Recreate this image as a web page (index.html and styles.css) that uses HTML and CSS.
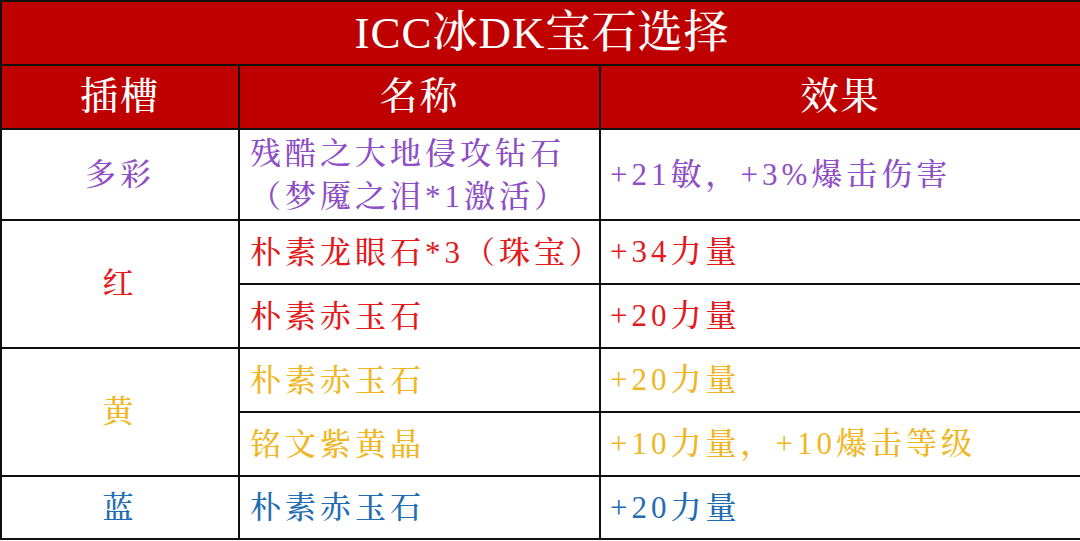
FILE: index.html
```html
<!DOCTYPE html>
<html lang="zh-CN">
<head>
<meta charset="utf-8">
<title>ICC冰DK宝石选择</title>
<link rel="stylesheet" href="styles.css">
</head>
<body>
<table class="gems">
  <colgroup>
    <col class="c-slot">
    <col class="c-name">
    <col class="c-effect">
  </colgroup>
  <thead>
    <tr class="r-title"><th colspan="3" class="title">ICC冰DK宝石选择</th></tr>
    <tr class="r-head"><th>插槽</th><th>名称</th><th>效果</th></tr>
  </thead>
  <tbody>
    <tr class="r-tall purple">
      <td class="slot">多彩</td>
      <td class="name">残酷之大地侵攻钻石<br>（梦魇之泪*1激活）</td>
      <td class="effect">+21敏，+3%爆击伤害</td>
    </tr>
    <tr class="r-std red">
      <td class="slot" rowspan="2">红</td>
      <td class="name nowrap">朴素龙眼石*3（珠宝）</td>
      <td class="effect">+34力量</td>
    </tr>
    <tr class="r-std red">
      <td class="name">朴素赤玉石</td>
      <td class="effect">+20力量</td>
    </tr>
    <tr class="r-std yellow">
      <td class="slot" rowspan="2">黄</td>
      <td class="name">朴素赤玉石</td>
      <td class="effect">+20力量</td>
    </tr>
    <tr class="r-std yellow">
      <td class="name">铭文紫黄晶</td>
      <td class="effect">+10力量，+10爆击等级</td>
    </tr>
    <tr class="r-last blue">
      <td class="slot">蓝</td>
      <td class="name">朴素赤玉石</td>
      <td class="effect">+20力量</td>
    </tr>
  </tbody>
</table>
</body>
</html>
```

FILE: styles.css
```css
html, body {
  margin: 0;
  padding: 0;
  background: #ffffff;
}

body {
  font-family: "Liberation Serif", "Noto Serif CJK SC", "Noto Sans CJK SC", serif;
}

.gems {
  width: 1080px;
  border-collapse: collapse;
  table-layout: fixed;
}

.c-slot { width: 238px; }
.c-name { width: 361px; }
.c-effect { width: 481px; }

.gems th,
.gems td {
  border: 2px solid #141010;
  padding: 0;
  vertical-align: middle;
  line-height: 1.2;
}

.gems th {
  background: #bf0000;
  color: #ffffff;
  font-weight: 500;
  text-align: center;
}

.r-title { height: 64px; }
.r-head { height: 64px; }
.r-tall { height: 91px; }
.r-std { height: 64px; }
.r-last { height: 63px; }

.gems .title {
  font-size: 45px;
  letter-spacing: 1px;
  padding-left: 2px;
}

.r-head th {
  font-size: 38px;
  letter-spacing: 2px;
}

.gems td {
  font-size: 31px;
  letter-spacing: 4px;
  font-weight: 500;
}

.gems .slot {
  text-align: center;
  padding-left: 0;
}

.gems .name {
  text-align: left;
  padding-left: 10px;
  line-height: 43px;
}

.gems .nowrap {
  white-space: nowrap;
  overflow: visible;
}

.gems .effect {
  text-align: left;
  padding-left: 9px;
}

.purple { color: #8e4ec6; }
.red { color: #e3191c; }
.yellow { color: #f0b623; }
.blue { color: #1f6db3; }
```
